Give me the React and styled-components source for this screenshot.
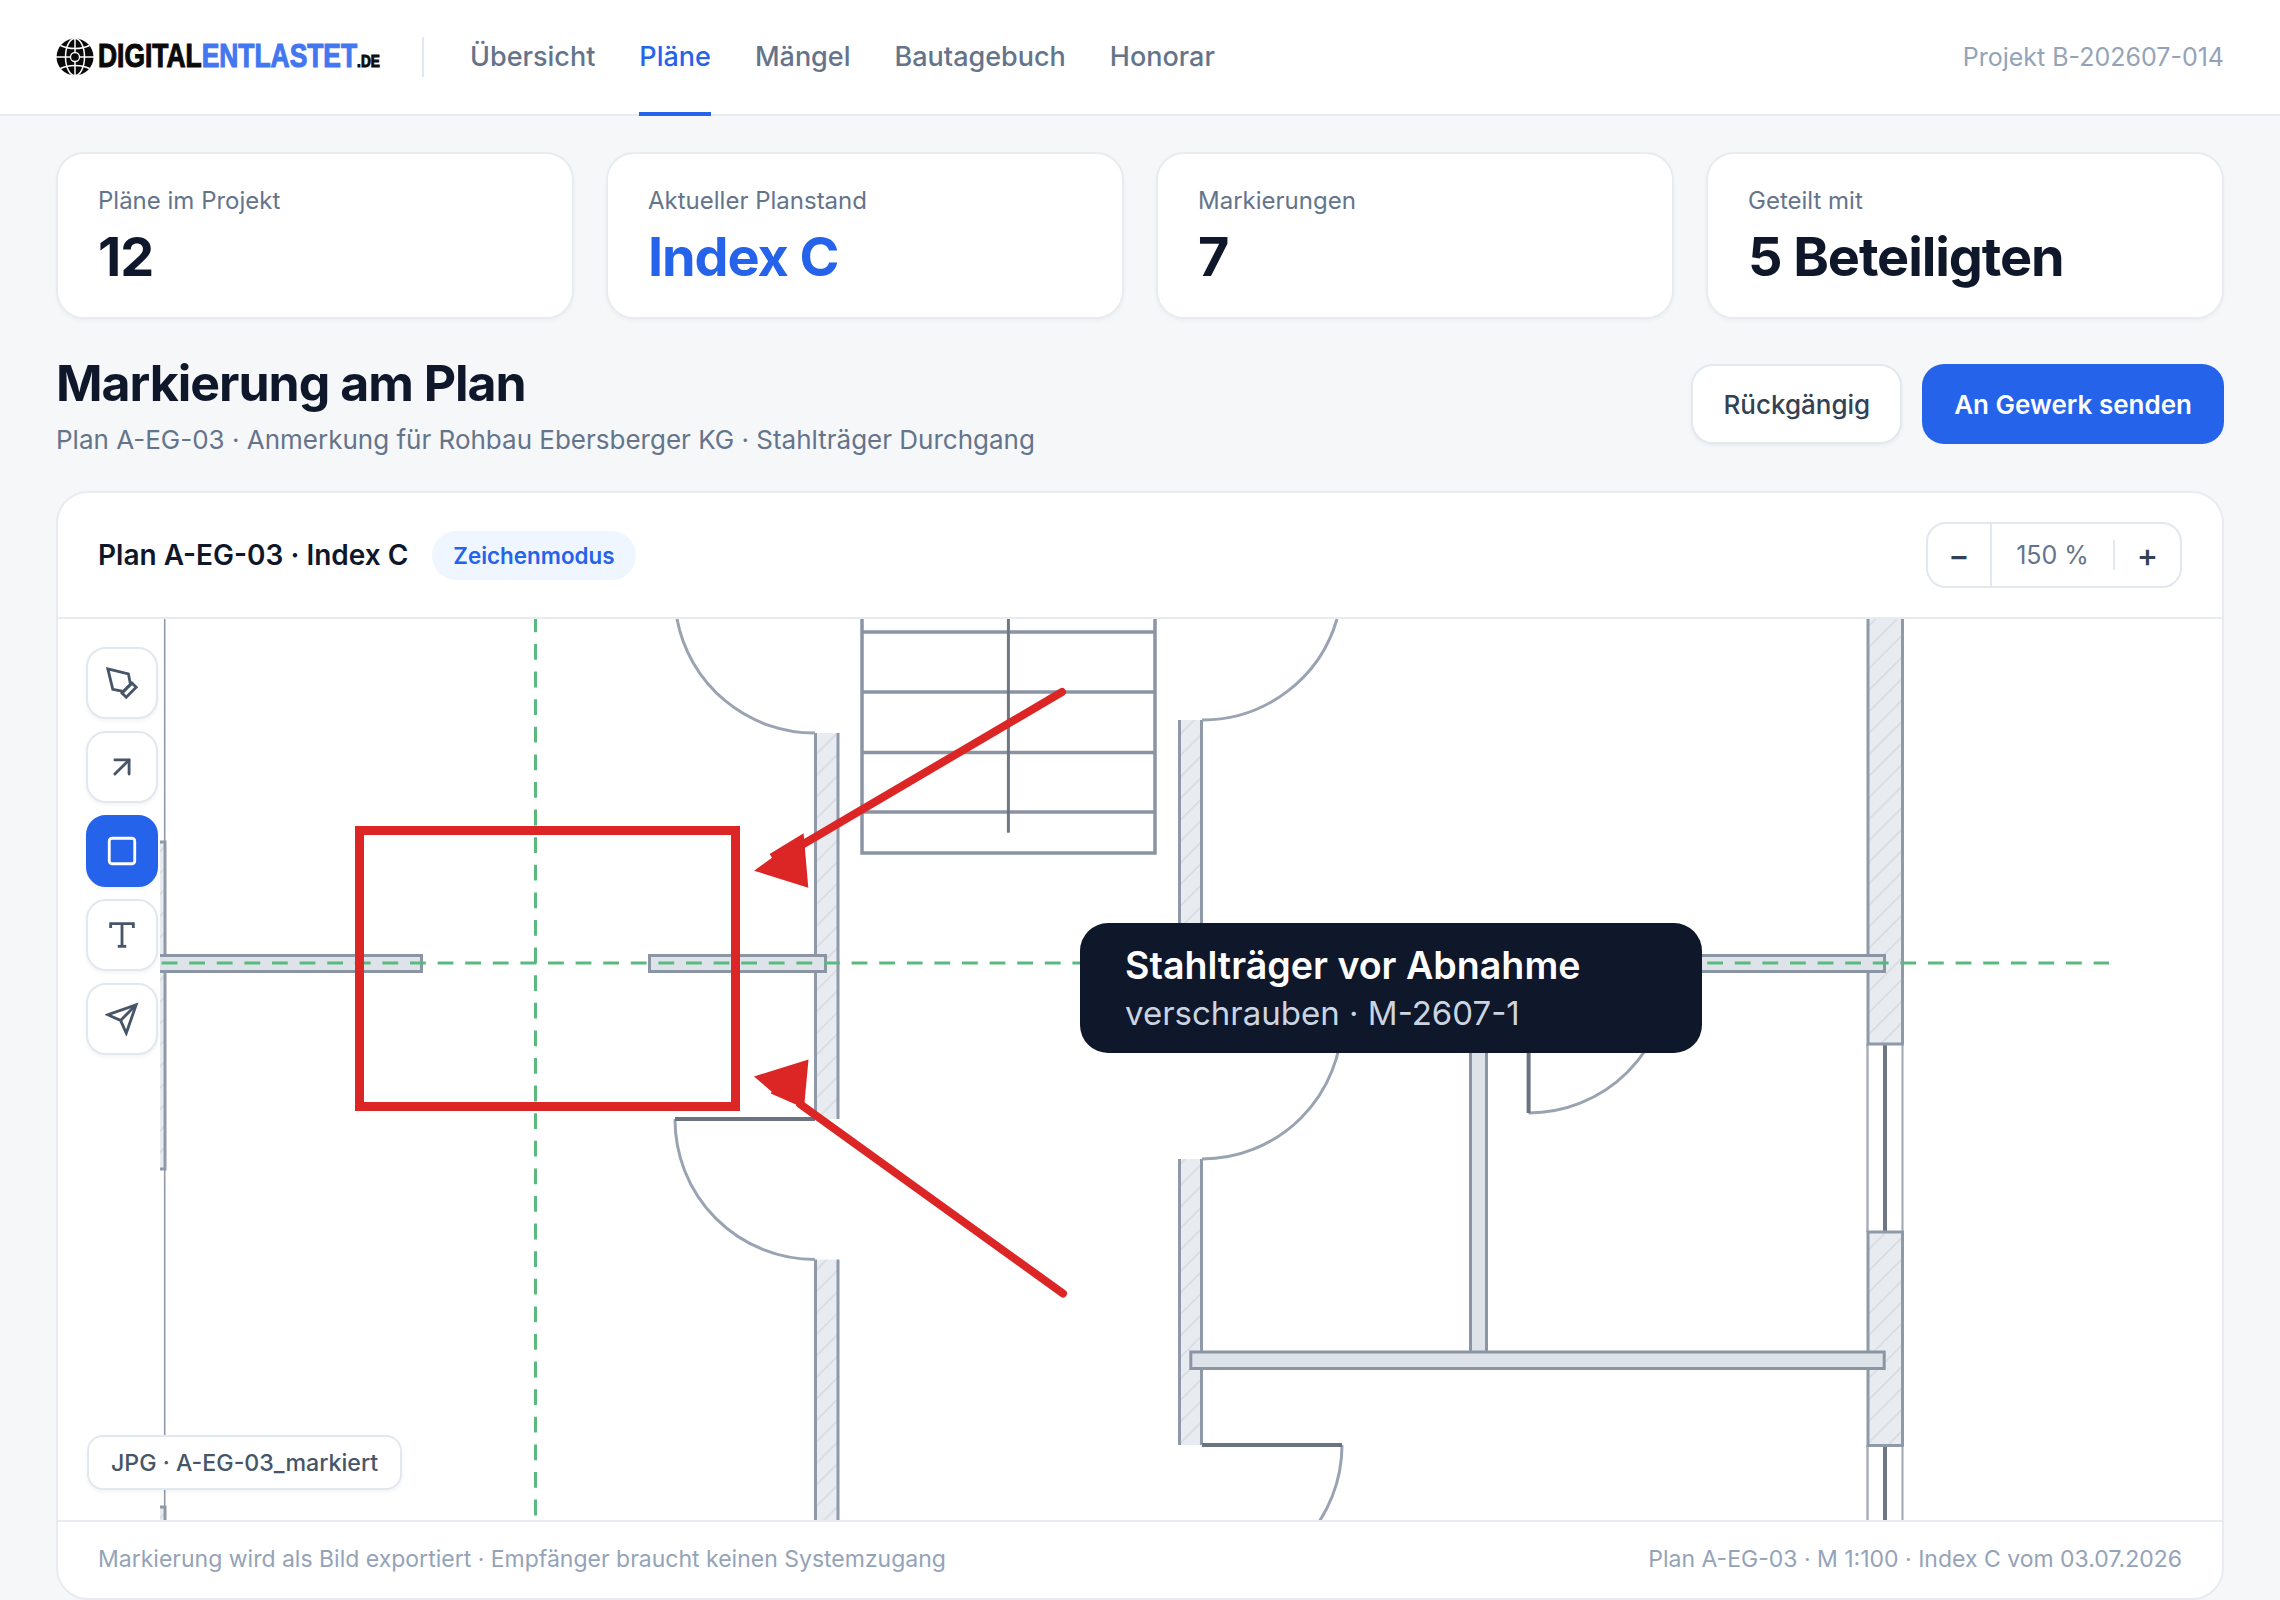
import React from "react";
import styled, { createGlobalStyle } from "styled-components";
import { ArrowUpRight, Square } from "lucide-react";

const PenIcon = () => (
  <ToolSvg viewBox="0 0 24 24">
    <path d="M12 19l7-7 3 3-7 7-3-3z" />
    <path d="M18 13l-1.5-7.5L2 2l3.5 14.5L13 18l5-5z" />
  </ToolSvg>
);

const TextIcon = () => (
  <ToolSvg viewBox="0 0 24 24">
    <path d="M4 7V4h16v3" />
    <path d="M9 20h6" />
    <path d="M12 4v16" />
  </ToolSvg>
);

const SendIcon = () => (
  <ToolSvg viewBox="0 0 24 24">
    <path d="M22 2L11 13" />
    <path d="M22 2l-7 20-4-9-9-4 20-7z" />
  </ToolSvg>
);

const ArrowIcon = () => <ArrowUpRight size={34} strokeWidth={2} />;
const RectIcon = () => <Square size={34} strokeWidth={2} />;

const stats = [
  { id: "plans", label: "Pläne im Projekt", value: "12" },
  { id: "index", label: "Aktueller Planstand", value: "Index C", accent: true },
  { id: "marks", label: "Markierungen", value: "7" },
  { id: "shared", label: "Geteilt mit", value: "5 Beteiligten" },
];

const navItems = ["Übersicht", "Pläne", "Mängel", "Bautagebuch", "Honorar"];

const tools = [
  { id: "pen", icon: PenIcon },
  { id: "arrow", icon: ArrowIcon },
  { id: "rect", icon: RectIcon, active: true },
  { id: "text", icon: TextIcon },
  { id: "send", icon: SendIcon },
];

const GlobalStyle = createGlobalStyle`
  html, body {
    margin: 0;
    background: #f6f7f9;
  }
  body {
    font-family: Inter, "Liberation Sans", sans-serif;
    color: #0f172a;
  }
  * {
    box-sizing: border-box;
  }
`;

const Logo = () => (
  <LogoWrap>
    <LogoGlobe viewBox="0 0 38 38">
      <circle cx="19" cy="19" r="18.5" fill="#0a0a0a" />
      <g fill="none" stroke="#fff" strokeWidth="1.5">
        <ellipse cx="19" cy="19" rx="9.5" ry="18.5" />
        <path d="M19 0V38M0 19H38" />
        <path d="M4.5 7.5c8 4 21 4 29 0M4.5 30.5c8-4 21-4 29 0" />
      </g>
      <circle cx="19" cy="19" r="4.5" fill="#0a0a0a" stroke="#fff" strokeWidth="1.3" />
    </LogoGlobe>
    <LogoText>
      DIGITAL<LogoAccent>ENTLASTET</LogoAccent>
      <LogoTld>.DE</LogoTld>
    </LogoText>
  </LogoWrap>
);

const WALL_STROKE = "#8f99a8";

const Wall = ({ x, y, w, h, closed }) => (
  <g>
    <rect x={x} y={y} width={w} height={h} fill="url(#hatch)" />
    {closed ? (
      <rect x={x} y={y} width={w} height={h} fill="none" stroke={WALL_STROKE} strokeWidth="3" />
    ) : (
      <path d={`M${x} ${y}V${y + h}M${x + w} ${y}V${y + h}`} stroke={WALL_STROKE} strokeWidth="3" fill="none" />
    )}
  </g>
);

const Beam = ({ x, y, w, h }) => (
  <rect x={x} y={y} width={w} height={h} fill="#dee2e9" stroke="#8b95a3" strokeWidth="3" />
);

const Door = ({ d, bar }) => (
  <g fill="none">
    <path d={d} stroke="#9aa3b1" strokeWidth="3" />
    {bar && <path d={bar} stroke="#6b7280" strokeWidth="4" />}
  </g>
);

const PlanDrawing = () => (
  <PlanSvg viewBox="58 619 2164 901">
    <defs>
      <pattern id="hatch" width="15.2" height="15.2" patternUnits="userSpaceOnUse" patternTransform="rotate(45)">
        <rect width="15.2" height="15.2" fill="#e8ebf0" />
        <line x1="0" y1="0" x2="0" y2="15.2" stroke="#d5dae1" strokeWidth="3" />
      </pattern>
      <clipPath id="planArea">
        <rect x="160" y="619" width="2062" height="901" />
      </clipPath>
    </defs>

    <g clipPath="url(#planArea)">
      <path d="M164.7 619V842M164.7 1169V1507" stroke="#8f99a8" strokeWidth="1.6" fill="none" />
      <Wall x={130} y={842} w={35} h={327} closed />
      <Wall x={130} y={1507} w={35} h={40} closed />
      <Beam x={130} y={955.5} w={291.5} h={16} />

      <g stroke="#8a94a3" strokeWidth="3.5" fill="none">
        <path d="M862 600V853H1155V600" />
        <path d="M862 632H1155M862 692H1155M862 752.5H1155M862 812H1155" />
      </g>
      <path d="M1008.4 619V832.7" stroke="#6f7785" strokeWidth="3" />

      <Wall x={815.5} y={733} w={22.5} h={386} />
      <Wall x={815.5} y={1259.6} w={22.5} h={270} />
      <Door d="M677 619A140 140 0 0 0 815 733" />
      <Door d="M675 1119A140 140 0 0 0 815 1259.6" bar="M675 1119H815" />
      <Beam x={649.5} y={955.5} w={176} h={16} />

      <Wall x={1179.5} y={720} w={22} h={299} />
      <Wall x={1179.5} y={1159} w={22} h={286} />
      <Door d="M1337 619A140 140 0 0 1 1202 720" />
      <Door d="M1342 1019A140 140 0 0 1 1202 1159" />
      <Door d="M1342 1445A140 140 0 0 1 1202 1585" bar="M1202 1445H1342" />

      <rect x="1471" y="1040" width="15" height="312" fill="#dee2e9" />
      <path d="M1470.5 1040V1352M1486.5 1040V1352" stroke="#8b95a3" strokeWidth="3" fill="none" />
      <Door d="M1668.6 973A140 140 0 0 1 1528.6 1113" bar="M1528.6 973V1113" />

      <g fill="none">
        <path d="M1867.5 1044V1232M1867.5 1445V1530" stroke="#a8afbb" strokeWidth="2.5" />
        <path d="M1885 1044V1232M1885 1445V1530" stroke="#6f7785" strokeWidth="4" />
        <path d="M1902.5 1044V1232M1902.5 1445V1530" stroke="#9ea6b2" strokeWidth="2" />
      </g>
      <Wall x={1868} y={600} w={34.5} h={444} closed />
      <Wall x={1868} y={1232} w={34.5} h={213.5} closed />
      <Beam x={1650} y={955.5} w={234.5} h={16} />
      <Beam x={1190.8} y={1352} w={693.4} h={16.5} />

      <g stroke="#5ab97f" strokeWidth="3" strokeDasharray="15.8 11.8" fill="none">
        <path d="M161.6 963H2109" />
        <path d="M535.5 616.4V1516" />
      </g>
    </g>

    <rect x="359.5" y="830.5" width="376" height="276" fill="none" stroke="#dc2626" strokeWidth="9" />
    <g stroke="#dc2626" strokeWidth="8" strokeLinecap="round" fill="none">
      <path d="M1062 692L800 846" />
      <path d="M1063 1293.5L800 1104" />
    </g>
    <g fill="#dc2626">
      <polygon points="754,870.7 772,857.7 769.6,854 803.6,833.3 808.3,887.7" />
      <polygon points="754,1076.4 771.7,1091.8 770.7,1093.6 804,1108 808.5,1059.6" />
    </g>
  </PlanSvg>
);

const App = () => {
  return (
    <Page>
      <GlobalStyle />
      <Header>
        <Logo />
        <HeaderDivider />
        <Nav>
          {navItems.map((item) => (
            <NavItem key={item} $active={item === "Pläne"}>
              {item}
            </NavItem>
          ))}
        </Nav>
        <ProjectId>Projekt B-202607-014</ProjectId>
      </Header>

      <Main>
        <StatGrid>
          {stats.map((stat) => (
            <StatCard key={stat.id}>
              <StatLabel>{stat.label}</StatLabel>
              <StatValue $accent={stat.accent}>{stat.value}</StatValue>
            </StatCard>
          ))}
        </StatGrid>

        <SectionHead>
          <div>
            <SectionTitle>Markierung am Plan</SectionTitle>
            <SectionSub>Plan A-EG-03 · Anmerkung für Rohbau Ebersberger KG · Stahlträger Durchgang</SectionSub>
          </div>
          <Actions>
            <GhostButton>Rückgängig</GhostButton>
            <PrimaryButton>An Gewerk senden</PrimaryButton>
          </Actions>
        </SectionHead>

        <Panel>
          <PanelHead>
            <PanelTitle>Plan A-EG-03 · Index C</PanelTitle>
            <ModeBadge>Zeichenmodus</ModeBadge>
            <ZoomControl>
              <ZoomStep $divider>−</ZoomStep>
              <ZoomValue>150 %</ZoomValue>
              <ZoomTick />
              <ZoomStep>+</ZoomStep>
            </ZoomControl>
          </PanelHead>

          <Canvas>
            <PlanDrawing />
            <Toolbar>
              {tools.map(({ id, icon: Icon, active }) => (
                <ToolButton key={id} $active={active}>
                  <Icon />
                </ToolButton>
              ))}
            </Toolbar>
            <Note>
              <NoteTitle>Stahlträger vor Abnahme</NoteTitle>
              <NoteSub>verschrauben · M-2607-1</NoteSub>
            </Note>
            <ExportPill>JPG · A-EG-03_markiert</ExportPill>
          </Canvas>

          <PanelFoot>
            <span>Markierung wird als Bild exportiert · Empfänger braucht keinen Systemzugang</span>
            <span>Plan A-EG-03 · M 1:100 · Index C vom 03.07.2026</span>
          </PanelFoot>
        </Panel>
      </Main>
    </Page>
  );
};

const Page = styled.div`
  width: 2280px;
  height: 1600px;
  overflow: hidden;
`;

const Header = styled.header`
  height: 116px;
  padding: 0 56px;
  display: flex;
  align-items: center;
  background: #fff;
  border-bottom: 2px solid #e8ebf0;
`;

const LogoWrap = styled.div`
  width: 322px;
  flex: none;
  display: flex;
  align-items: center;
  gap: 4px;
`;

const LogoGlobe = styled.svg`
  width: 38px;
  height: 38px;
  flex: none;
`;

const LogoText = styled.div`
  font-family: "Liberation Sans", sans-serif;
  font-weight: 700;
  font-size: 33px;
  line-height: 38px;
  color: #0a0a0a;
  white-space: nowrap;
  -webkit-text-stroke: 1.1px currentColor;
  transform: translateY(2px) scaleX(0.8);
  transform-origin: left center;
`;

const LogoAccent = styled.span`
  color: #4277f0;
`;

const LogoTld = styled.span`
  font-size: 17px;
`;

const HeaderDivider = styled.div`
  width: 2px;
  height: 40px;
  margin: 0 46px 0 44px;
  background: #e2e8f0;
`;

const Nav = styled.nav`
  align-self: stretch;
  display: flex;
  gap: 44px;
`;

const NavItem = styled.a`
  height: 116px;
  display: flex;
  align-items: center;
  font-size: 27px;
  font-weight: 500;
  color: ${(p) => (p.$active ? "#2563eb" : "#64748b")};
  border-bottom: 4px solid ${(p) => (p.$active ? "#2563eb" : "transparent")};
`;

const ProjectId = styled.div`
  margin-left: auto;
  font-size: 25px;
  color: #94a3b8;
`;

const Main = styled.main`
  padding: 36px 56px 0;
`;

const StatGrid = styled.div`
  display: grid;
  grid-template-columns: repeat(4, 1fr);
  gap: 32px;
`;

const StatCard = styled.div`
  height: 167px;
  padding: 30px 40px;
  background: #fff;
  border: 2px solid #e8ebf0;
  border-radius: 28px;
  box-shadow: 0 2px 4px rgba(15, 23, 42, 0.04);
`;

const StatLabel = styled.div`
  font-size: 24px;
  line-height: 34px;
  color: #64748b;
`;

const StatValue = styled.div`
  margin-top: 5px;
  font-size: 54px;
  line-height: 68px;
  font-weight: 700;
  letter-spacing: -0.02em;
  color: ${(p) => (p.$accent ? "#2563eb" : "#0f172a")};
`;

const SectionHead = styled.div`
  height: 108px;
  margin: 33px 0 31px;
  display: flex;
  align-items: flex-start;
  justify-content: space-between;
`;

const SectionTitle = styled.h1`
  margin: 0;
  font-size: 50px;
  line-height: 62px;
  font-weight: 700;
  letter-spacing: -0.02em;
`;

const SectionSub = styled.p`
  margin: 5px 0 0;
  font-size: 26px;
  line-height: 42px;
  color: #64748b;
`;

const Actions = styled.div`
  margin-top: 12px;
  display: flex;
  gap: 20px;
`;

const GhostButton = styled.button`
  height: 80px;
  padding: 0 30px;
  font: 500 26px Inter, sans-serif;
  color: #334155;
  background: #fff;
  border: 2px solid #e2e8f0;
  border-radius: 22px;
  box-shadow: 0 2px 4px rgba(15, 23, 42, 0.05);
`;

const PrimaryButton = styled.button`
  height: 80px;
  padding: 0 32px;
  font: 600 26px Inter, sans-serif;
  color: #fff;
  background: #2563eb;
  border: none;
  border-radius: 22px;
`;

const Panel = styled.section`
  height: 1109px;
  display: flex;
  flex-direction: column;
  background: #fff;
  border: 2px solid #e8ebf0;
  border-radius: 32px;
  overflow: hidden;
`;

const PanelHead = styled.div`
  height: 126px;
  padding: 0 40px;
  flex: none;
  display: flex;
  align-items: center;
  gap: 24px;
  border-bottom: 2px solid #e8ebf0;
`;

const PanelTitle = styled.div`
  font-size: 28px;
  font-weight: 600;
`;

const ModeBadge = styled.div`
  height: 49px;
  padding: 0 21px;
  display: flex;
  align-items: center;
  font-size: 22.4px;
  font-weight: 600;
  color: #2563eb;
  background: #eff6ff;
  border-radius: 25px;
`;

const ZoomControl = styled.div`
  margin-left: auto;
  width: 256px;
  height: 66px;
  display: flex;
  align-items: center;
  border: 2px solid #e2e8f0;
  border-radius: 20px;
`;

const ZoomStep = styled.div`
  width: ${(p) => (p.$divider ? "64px" : "65px")};
  height: 100%;
  display: flex;
  align-items: center;
  justify-content: center;
  font-size: 32px;
  font-weight: 500;
  color: #334155;
  border-right: ${(p) => (p.$divider ? "2px solid #e2e8f0" : "none")};
`;

const ZoomValue = styled.div`
  flex: 1;
  text-align: center;
  font-size: 25px;
  color: #64748b;
`;

const ZoomTick = styled.div`
  width: 2px;
  height: 30px;
  background: #e2e8f0;
`;

const Canvas = styled.div`
  position: relative;
  flex: 1;
  overflow: hidden;
  background: #fff;
`;

const PlanSvg = styled.svg`
  display: block;
  width: 2164px;
  height: 901px;
`;

const Toolbar = styled.div`
  position: absolute;
  top: 28px;
  left: 28px;
  display: flex;
  flex-direction: column;
  gap: 12px;
`;

const ToolButton = styled.div`
  width: 72px;
  height: 72px;
  display: flex;
  align-items: center;
  justify-content: center;
  color: ${(p) => (p.$active ? "#fff" : "#475569")};
  background: ${(p) => (p.$active ? "#2563eb" : "#fff")};
  border: 2px solid ${(p) => (p.$active ? "#2563eb" : "#e2e8f0")};
  border-radius: 20px;
  box-shadow: 0 2px 4px rgba(15, 23, 42, 0.05);
`;

const ToolSvg = styled.svg`
  width: 34px;
  height: 34px;
  fill: none;
  stroke: currentColor;
  stroke-width: 2;
`;

const Note = styled.div`
  position: absolute;
  left: 1022px;
  top: 304px;
  width: 622px;
  height: 130px;
  padding: 0 45px;
  display: flex;
  flex-direction: column;
  justify-content: center;
  background: #0f172a;
  border-radius: 28px;
`;

const NoteTitle = styled.div`
  font-size: 37.6px;
  line-height: 50px;
  font-weight: 600;
  color: #fff;
`;

const NoteSub = styled.div`
  font-size: 33px;
  line-height: 44px;
  color: #cbd5e1;
`;

const ExportPill = styled.div`
  position: absolute;
  left: 29px;
  top: 816px;
  height: 55px;
  padding: 0 22px;
  display: flex;
  align-items: center;
  font-size: 23.2px;
  font-weight: 500;
  color: #475569;
  background: #fff;
  border: 2px solid #e2e8f0;
  border-radius: 16px;
  box-shadow: 0 2px 4px rgba(15, 23, 42, 0.05);
`;

const PanelFoot = styled.div`
  height: 78px;
  padding: 0 40px 2px;
  flex: none;
  display: flex;
  align-items: center;
  justify-content: space-between;
  font-size: 23px;
  color: #94a3b8;
  border-top: 2px solid #e8ebf0;
`;

export default App;
